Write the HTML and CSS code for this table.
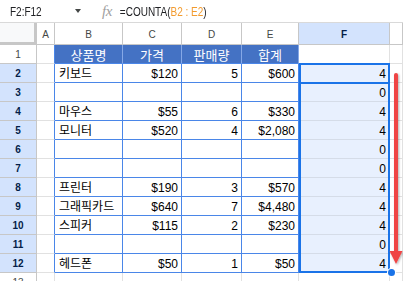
FILE: index.html
```html
<!DOCTYPE html>
<html lang="ko">
<head>
<meta charset="utf-8">
<title>COUNTA</title>
<link rel="stylesheet" href="styles.css">
</head>
<body>
<div class="topbar">
  <div class="namebox">F2:F12</div>
  <div class="caret"></div>
  <div class="fx">fx</div>
  <div class="formula">=COUNTA(<span class="rng">B2 : E2</span>)</div>
</div>
<div class="sheet">
  <div class="corner"></div>
  <div class="ch">A</div>
  <div class="ch">B</div>
  <div class="ch">C</div>
  <div class="ch">D</div>
  <div class="ch">E</div>
  <div class="ch sel">F</div>
  <div class="ch"></div>

  <div class="rh">1</div>
  <div class="c ta"></div>
  <div class="c th">상품명</div>
  <div class="c th">가격</div>
  <div class="c th">판매량</div>
  <div class="c th">합계</div>
  <div class="c"></div>
  <div class="c"></div>

  <div class="rh sel">2</div>
  <div class="c ta"></div>
  <div class="c t">키보드</div>
  <div class="c t r">$120</div>
  <div class="c t r">5</div>
  <div class="c t r">$600</div>
  <div class="c f r">4</div>
  <div class="c"></div>

  <div class="rh sel">3</div>
  <div class="c ta"></div>
  <div class="c t"></div>
  <div class="c t r"></div>
  <div class="c t r"></div>
  <div class="c t r"></div>
  <div class="c f r">0</div>
  <div class="c"></div>

  <div class="rh sel">4</div>
  <div class="c ta"></div>
  <div class="c t">마우스</div>
  <div class="c t r">$55</div>
  <div class="c t r">6</div>
  <div class="c t r">$330</div>
  <div class="c f r">4</div>
  <div class="c"></div>

  <div class="rh sel">5</div>
  <div class="c ta"></div>
  <div class="c t">모니터</div>
  <div class="c t r">$520</div>
  <div class="c t r">4</div>
  <div class="c t r">$2,080</div>
  <div class="c f r">4</div>
  <div class="c"></div>

  <div class="rh sel">6</div>
  <div class="c ta"></div>
  <div class="c t"></div>
  <div class="c t r"></div>
  <div class="c t r"></div>
  <div class="c t r"></div>
  <div class="c f r">0</div>
  <div class="c"></div>

  <div class="rh sel">7</div>
  <div class="c ta"></div>
  <div class="c t"></div>
  <div class="c t r"></div>
  <div class="c t r"></div>
  <div class="c t r"></div>
  <div class="c f r">0</div>
  <div class="c"></div>

  <div class="rh sel">8</div>
  <div class="c ta"></div>
  <div class="c t">프린터</div>
  <div class="c t r">$190</div>
  <div class="c t r">3</div>
  <div class="c t r">$570</div>
  <div class="c f r">4</div>
  <div class="c"></div>

  <div class="rh sel">9</div>
  <div class="c ta"></div>
  <div class="c t">그래픽카드</div>
  <div class="c t r">$640</div>
  <div class="c t r">7</div>
  <div class="c t r">$4,480</div>
  <div class="c f r">4</div>
  <div class="c"></div>

  <div class="rh sel">10</div>
  <div class="c ta"></div>
  <div class="c t">스피커</div>
  <div class="c t r">$115</div>
  <div class="c t r">2</div>
  <div class="c t r">$230</div>
  <div class="c f r">4</div>
  <div class="c"></div>

  <div class="rh sel">11</div>
  <div class="c ta"></div>
  <div class="c t"></div>
  <div class="c t r"></div>
  <div class="c t r"></div>
  <div class="c t r"></div>
  <div class="c f r">0</div>
  <div class="c"></div>

  <div class="rh sel">12</div>
  <div class="c ta"></div>
  <div class="c t">헤드폰</div>
  <div class="c t r">$50</div>
  <div class="c t r">1</div>
  <div class="c t r">$50</div>
  <div class="c f r">4</div>
  <div class="c"></div>

  <div class="rh">13</div>
  <div class="c"></div>
  <div class="c"></div>
  <div class="c"></div>
  <div class="c"></div>
  <div class="c"></div>
  <div class="c"></div>
  <div class="c"></div>

  <div class="selection"></div>
  <div class="active"></div>
  <div class="handle"></div>
  <svg class="arrow" width="403" height="258" viewBox="0 0 403 258">
    <defs>
      <filter id="sh" x="-50%" y="-5%" width="200%" height="110%">
        <feDropShadow dx="1" dy="1" stdDeviation="0.8" flood-color="#000" flood-opacity="0.3"/>
      </filter>
    </defs>
    <g filter="url(#sh)">
      <line x1="396" y1="52" x2="396" y2="230" stroke="#ef4444" stroke-width="4" stroke-linecap="round"/>
      <polygon points="389.5,228 402.5,228 396,241" fill="#ef4444"/>
    </g>
  </svg>
</div>
</body>
</html>
```

FILE: styles.css
```css
html, body {
  margin: 0;
  padding: 0;
  width: 403px;
  height: 281px;
  overflow: hidden;
  background: #ffffff;
  font-family: "Liberation Sans", Arial, "Noto Sans CJK KR", sans-serif;
}

.topbar {
  height: 22px;
  border-bottom: 1px solid #d9d9d9;
  display: flex;
  align-items: center;
  color: #202124;
}

.namebox {
  font-size: 10px;
  width: 60px;
  padding-left: 10px;
  transform: scaleY(1.25);
}

.caret {
  width: 0;
  height: 0;
  border-left: 3.5px solid transparent;
  border-right: 3.5px solid transparent;
  border-top: 4px solid #444746;
  margin-left: 5px;
}

.fx {
  font-family: "Liberation Serif", serif;
  font-style: italic;
  font-size: 15px;
  color: #a0a0a0;
  margin-left: 21px;
  letter-spacing: -0.5px;
}

.formula {
  font-size: 10px;
  margin-left: 8px;
  color: #202124;
  transform: scaleY(1.25);
}

.rng {
  color: #f29b2f;
}

.sheet {
  position: relative;
  display: grid;
  grid-template-columns: 37px 18px 68px 59px 60px 57px 91px 13px;
  grid-template-rows: 22px repeat(13, 19px);
}

.corner {
  background: #f8f9fa;
  border-right: 3px solid #c7c7c7;
  border-bottom: 3px solid #c7c7c7;
}

.ch {
  border-right: 1px solid #c7c7c7;
  border-bottom: 1px solid #c7c7c7;
  display: flex;
  align-items: center;
  justify-content: center;
  padding-top: 2px;
  font-size: 10px;
  color: #444746;
}

.ch.sel {
  background: #d3e3fd;
  color: #041e49;
  font-weight: bold;
}

.rh {
  border-right: 1px solid #c7c7c7;
  border-bottom: 1px solid #c7c7c7;
  display: flex;
  align-items: center;
  justify-content: center;
  font-size: 10px;
  color: #444746;
  padding-top: 1px;
}

.rh.sel {
  background: #d3e3fd;
  color: #041e49;
  font-weight: bold;
}

.c {
  border-right: 1px solid #e1e1e1;
  border-bottom: 1px solid #e1e1e1;
  display: flex;
  align-items: flex-end;
  padding: 0 4px 1px 4px;
  font-size: 12px;
  line-height: 14px;
  color: #000000;
  white-space: nowrap;
  overflow: hidden;
}

.r {
  justify-content: flex-end;
  padding-right: 3px;
}

.ta {
  border-right-color: #4a86e8;
}

.t {
  border-right-color: #4a86e8;
  border-bottom-color: #4a86e8;
}

.th {
  background: #4472c4;
  color: #ffffff;
  border-right-color: #86a8e6;
  border-bottom-color: #4a86e8;
  justify-content: center;
  font-size: 13px;
  padding-bottom: 0;
}

.f {
  background: #e8f0fe;
  border-bottom-color: #d5dce8;
}

.selection {
  position: absolute;
  left: 299px;
  top: 40px;
  width: 91px;
  height: 210px;
  box-sizing: border-box;
  border: 2px solid #1a73e8;
}

.active {
  position: absolute;
  left: 299px;
  top: 40px;
  width: 91px;
  height: 21px;
  box-sizing: border-box;
  border: 2px solid #1a73e8;
}

.handle {
  position: absolute;
  left: 388px;
  top: 246px;
  width: 7px;
  height: 7px;
  border-radius: 50%;
  background: #1a73e8;
  box-shadow: 0 0 0 1px #ffffff;
}

.arrow {
  position: absolute;
  left: 0;
  top: 0;
  pointer-events: none;
}
```
